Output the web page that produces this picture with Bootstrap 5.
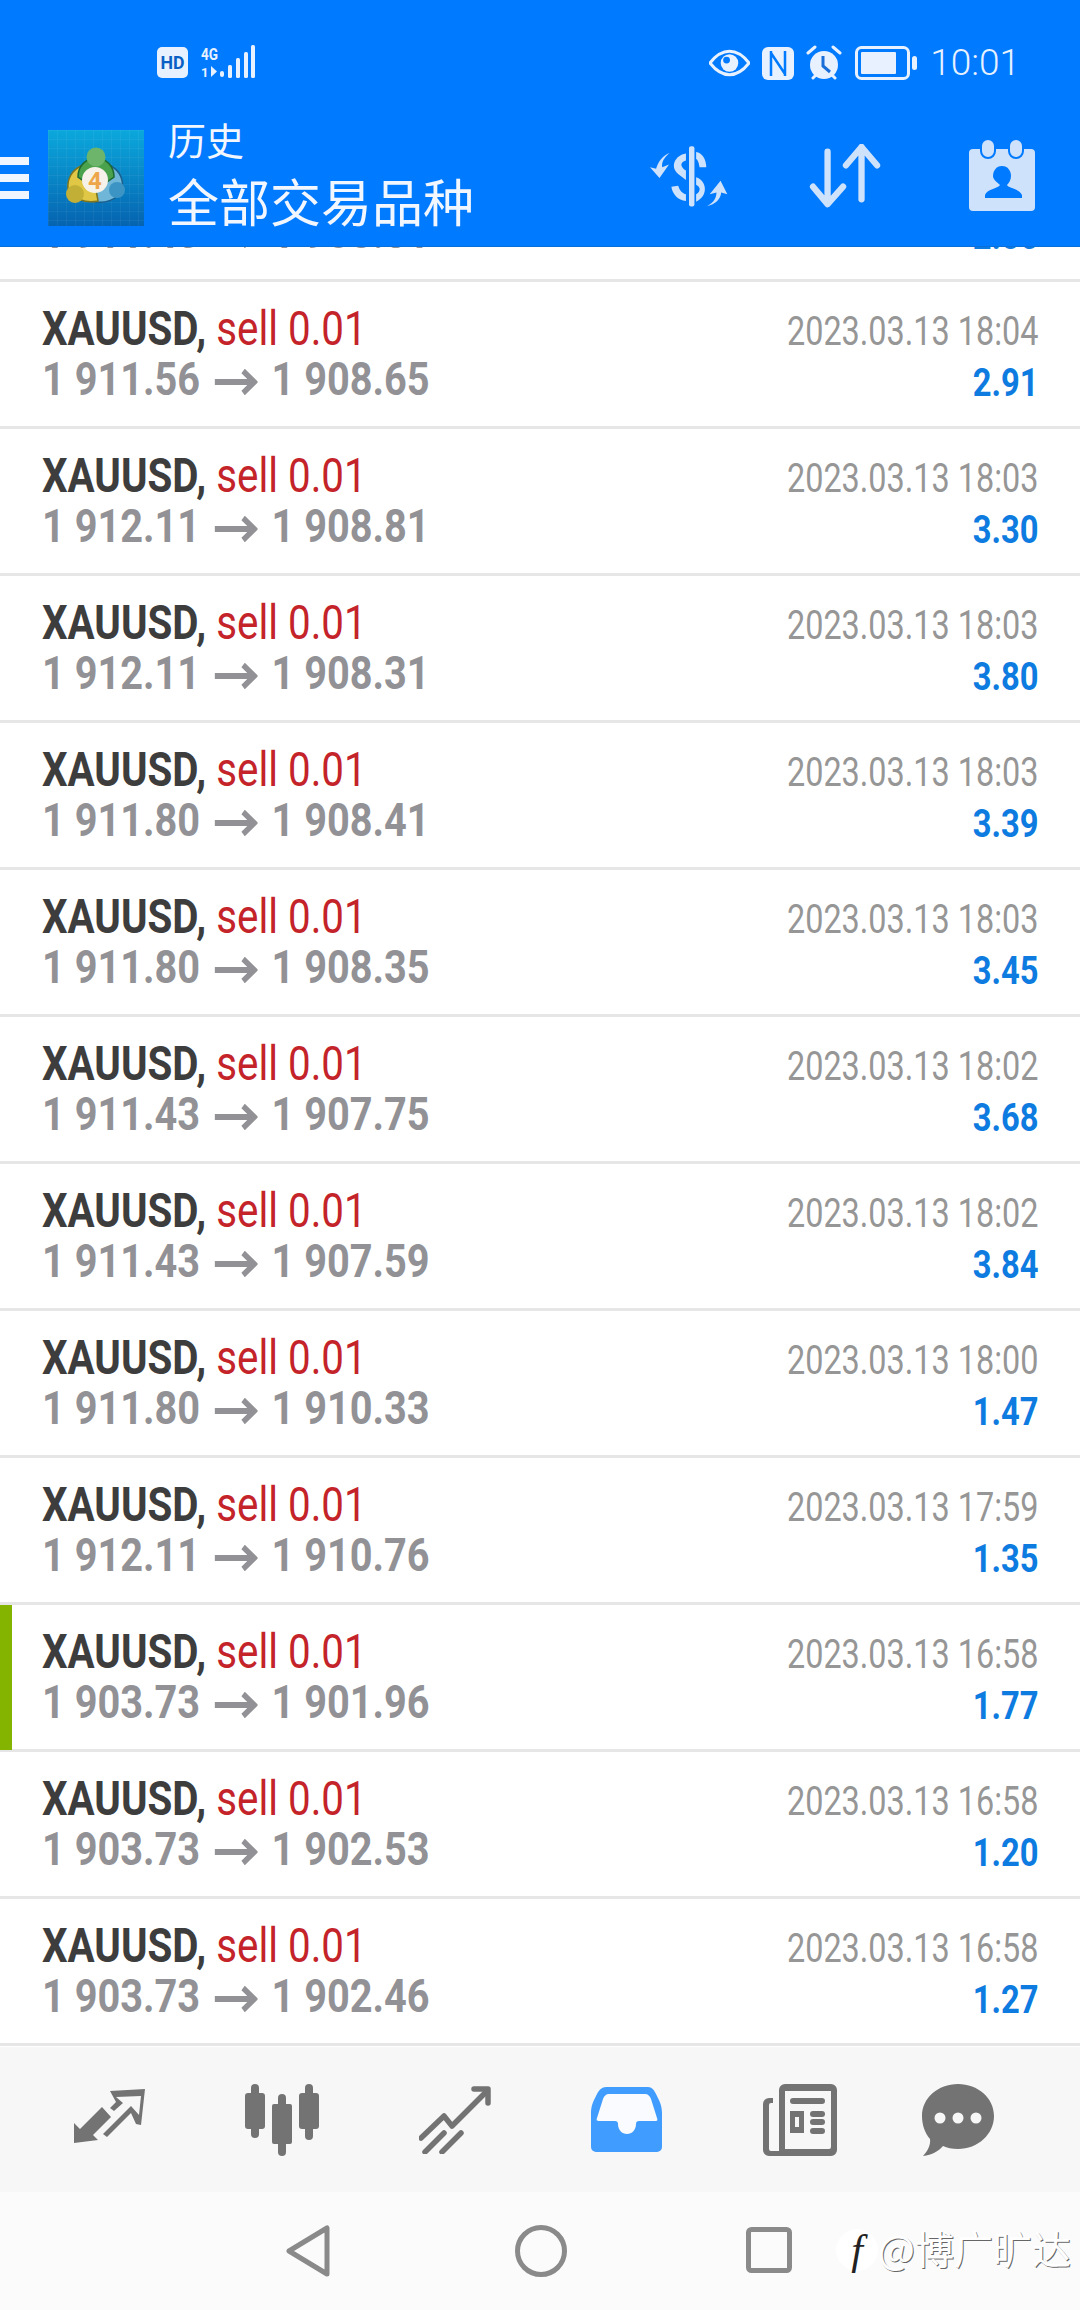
<!DOCTYPE html>
<html lang="zh">
<head>
<meta charset="UTF-8">
<title>历史</title>
<link href="https://cdn.jsdelivr.net/npm/bootstrap@5.3.0/dist/css/bootstrap.min.css" rel="stylesheet">
<style>
html, body { margin: 0; height: 2310px; overflow: hidden; background: #fff; }
.phone { height: 2310px; font-family: Roboto, sans-serif; }
.top-head { background: #007aff; height: 246px; color: #f0f6ff; z-index: 5; flex: none; box-shadow: 0 1px 0 #0a6fd8; }
.status-line { height: 110px; padding: 45px 60px 0 157px; }
.clock { font-size: 37px; line-height: 32px; font-weight: 300; color: #e8f1ff; margin-left: 13px; }
.st-gap { margin-right: 12px; }
.head-main { height: 136px; }
.burger { width: 29px; height: 42px; border-top: 8px solid #f0f6ff; border-bottom: 8px solid #f0f6ff; position: relative; margin-top: 0; }
.burger::after { content: ""; position: absolute; left: 0; right: 0; top: 9px; height: 8px; background: #f0f6ff; }
.app-logo { margin-left: 19px; display: block; }
.head-title { margin-left: 24px; margin-bottom: 4px; font-family: "Noto Sans CJK SC", sans-serif; color: #f2f7ff; white-space: nowrap; }
.title-sm { font-size: 38px; line-height: 48px; }
.title-lg { font-size: 51px; line-height: 74px; }
.head-tools { margin-bottom: 4px; }
.head-tools svg { display: block; }
.tool-dollar { margin-right: 81px; }
.tool-sort { margin-right: 85px; }
.tool-cal { margin-right: 44px; margin-bottom: 2px; }
.rows { flex: 1 1 auto; overflow: hidden; min-height: 0; }
.trade-row { height: 147px; padding: 21px 42px 0 42px; border-bottom: 3px solid #e6e6e6; position: relative; }
.trade-row.cut { margin-top: -111px; }
.trade-row.mark-green::before { content: ""; position: absolute; left: 0; top: 0; bottom: -1px; width: 12px; background: #84b300; }
.line-a { font-size: 48px; line-height: 52px; white-space: nowrap; transform: scaleX(.84); transform-origin: left center; }
.sym { font-weight: 700; color: #3d3d3d; }
.side { color: #c4232a; }
.line-b { font-size: 46px; line-height: 49px; color: #929296; font-weight: 700; white-space: nowrap; transform: scaleX(.863); transform-origin: left center; }
.go-arrow { display: inline-block; vertical-align: 0; margin: 0 5px; }
.when { font-size: 40px; line-height: 57px; color: #969696; transform: scaleX(.81); transform-origin: right center; white-space: nowrap; }
.gain { font-size: 38px; line-height: 46px; font-weight: 700; color: #0d7be0; transform: scaleX(.86); transform-origin: right center; }
.tool-tabs { height: 145px; background: #f7f7f7; flex: none; padding-left: 73px; gap: 100px; }
.tab-last { margin-left: -15px; }
.sys-nav { height: 118px; background: #fbfbfb; flex: none; position: relative; }
.nav-back { left: 286px; top: 33px; }
.nav-home { left: 515px; top: 33px; }
.nav-recent { left: 746px; top: 35px; }
.mark-text { position: absolute; right: 9px; top: 32px; font-family: "Noto Sans CJK SC", sans-serif; font-size: 39px; line-height: 46px; color: #fff; text-shadow: 1px 1px 0 #666; white-space: nowrap; }
.mark-f { display: inline-block; width: 42px; height: 42px; border-radius: 50%; background: #fff; color: #222; font-family: "Liberation Serif", serif; font-style: italic; font-size: 42px; line-height: 42px; text-align: center; text-shadow: none; margin-right: 0; }
</style>
</head>
<body>
<div class="phone d-flex flex-column">
  <div class="top-head position-relative">
    <div class="status-line d-flex justify-content-between align-items-start">
      <div class="d-flex align-items-center" style="gap:12px">
        <svg width="32" height="32" viewBox="0 0 32 32"><rect y="1" width="31" height="31" rx="5" fill="#e8f1ff"/><text x="15.5" y="23" text-anchor="middle" font-family="Roboto, sans-serif" font-size="19" font-weight="700" textLength="24" lengthAdjust="spacingAndGlyphs" fill="#0a5fc4">HD</text></svg>
        <svg width="54" height="34" viewBox="0 0 54 34" fill="#e8f1ff"><text x="0" y="15" font-family="Roboto, sans-serif" font-size="16" font-weight="700" textLength="17" lengthAdjust="spacingAndGlyphs">4G</text><text x="0" y="32" font-family="Roboto, sans-serif" font-size="13" font-weight="700">1</text><path d="M10 21v11l6-5.500z"/><rect x="19" y="26" width="4" height="6" rx="2"/><rect x="27" y="20" width="4" height="13" rx="1.500"/><rect x="35" y="13" width="4" height="20" rx="1.500"/><rect x="43" y="7" width="4" height="26" rx="1.500"/><rect x="50" y="0" width="4" height="33" rx="1.500"/></svg>
      </div>
      <div class="d-flex align-items-center">
        <svg class="st-gap" width="41" height="30" viewBox="0 0 42 30"><path d="M1 15C8 6 14 3 21 3s13 3 20 12c-7 9-13 12-20 12S8 24 1 15z" fill="none" stroke="#e8f1ff" stroke-width="3"/><circle cx="21" cy="15" r="9" fill="#e8f1ff"/><circle cx="18" cy="12" r="3.500" fill="#007aff"/></svg>
        <svg class="st-gap" width="32" height="33" viewBox="0 0 32 33"><rect width="32" height="33" rx="6" fill="#e8f1ff"/><path d="M9 4v25M9 6l14 21M23 4v25" fill="none" stroke="#007aff" stroke-width="2.500"/></svg>
        <svg width="36" height="36" viewBox="0 0 36 36" style="margin-right:13px"><circle cx="18" cy="20" r="14" fill="#e8f1ff"/><path d="M2 8l7-6M34 8l-7-6M7 33l3-3M29 33l-3-3" stroke="#e8f1ff" stroke-width="3" stroke-linecap="round"/><path d="M17 11v10l7 6" fill="none" stroke="#1a6ed8" stroke-width="3"/></svg>
        <svg width="62" height="34" viewBox="0 0 62 34"><rect x="1.500" y="1.500" width="52" height="31" rx="5" fill="none" stroke="#e8f1ff" stroke-width="3"/><rect x="6" y="6" width="35" height="22" rx="1" fill="#e8f1ff"/><rect x="57" y="10" width="5" height="14" rx="2.500" fill="#e8f1ff"/></svg>
        <span class="clock">10:01</span>
      </div>
    </div>
    <div class="head-main d-flex align-items-center">
      <div class="burger"></div>
      <svg class="app-logo" width="96" height="96" viewBox="0 0 96 96">
        <defs>
          <linearGradient id="bg1" x1="0" y1="0" x2="0" y2="1"><stop offset="0" stop-color="#0ba8dc"/><stop offset="1" stop-color="#0563b0"/></linearGradient>
          <pattern id="grid1" width="9" height="9" patternUnits="userSpaceOnUse"><path d="M9 0H0V9" fill="none" stroke="#ffffff" stroke-opacity=".09" stroke-width="1"/></pattern>
        </defs>
        <rect width="96" height="96" fill="url(#bg1)"/>
        <rect width="96" height="96" fill="url(#grid1)"/>
        <path d="M63 36c9 5 13 14 11 24-4 9-17 15-31 11l6-22z" fill="#6fb6d8" stroke="#1b5f8c" stroke-width="1.500"/>
        <path d="M33 36c-9 4-14 13-13 23 4 9 17 15 30 12L46 48z" fill="#e0c846" stroke="#7d7420" stroke-width="1.500"/>
        <path d="M48 28c-10 0-18 8-18 19l10 7h16l10-7c0-11-8-19-18-19z" fill="#4aa24c" stroke="#1d6a33" stroke-width="1.500"/>
        <circle cx="48" cy="27" r="9.500" fill="#6cb56a"/>
        <circle cx="27" cy="64" r="9" fill="#c2b036"/>
        <circle cx="69" cy="60" r="8" fill="#3b94c4"/>
        <circle cx="47" cy="50" r="13" fill="#f6f2ea"/>
        <text x="47" y="59" text-anchor="middle" font-family="Roboto, sans-serif" font-size="24" font-weight="700" fill="#eea64a">4</text>
      </svg>
      <div class="head-title">
        <div class="title-sm">历史</div>
        <div class="title-lg">全部交易品种</div>
      </div>
      <div class="head-tools ms-auto d-flex align-items-center">
        <svg class="tool-dollar" width="78" height="63" viewBox="322 425 230 185" fill="#cfe2fb">
          <rect x="437" y="428" width="16" height="178" rx="6"/>
          <path d="M428 450C395 455 380 490 405 510L428 528V500C410 488 410 475 428 470Z"/>
          <path d="M458 445C475 448 488 465 488 490L468 490C466 475 462 468 458 466Z"/>
          <path d="M458 520C490 530 495 575 458 592V570C472 562 472 548 458 542Z"/>
          <path d="M428 590C405 588 388 570 385 548L405 545C410 560 418 568 428 570Z"/>
          <path d="M380 448C365 460 355 475 358 490L378 482L350 522L322 490L340 495C345 475 360 455 380 448Z"/>
          <path d="M490 605C510 595 518 580 518 565L498 570L530 530L550 570L532 565C530 585 515 600 490 605Z"/>
        </svg>
        <svg class="tool-sort" width="74" height="64" viewBox="0 0 74 66" fill="none" stroke="#cfe2fb" stroke-width="6.500" stroke-linecap="round" stroke-linejoin="round"><path d="M18 8v54M3 44l15 18 16-18"/><path d="M53 3v54M37 22L53 3l16 19"/></svg>
        <svg class="tool-cal" width="68" height="72" viewBox="0 0 68 72"><path d="M5 10h58a4 4 0 0 1 4 4v54a4 4 0 0 1-4 4H5a4 4 0 0 1-4-4V14a4 4 0 0 1 4-4z" fill="#cfe2fb"/><rect x="13" y="0" width="14" height="19" rx="7" fill="#cfe2fb" stroke="#007aff" stroke-width="2"/><rect x="41" y="0" width="14" height="19" rx="7" fill="#cfe2fb" stroke="#007aff" stroke-width="2"/><path d="M34 27c6 0 9 5 9 10 0 4-2 7-4 9 1 3 13 4 15 10v3H17v-3c2-6 14-7 15-10-2-2-7-5-7-9 0-5 3-10 9-10z" fill="#007aff"/></svg>
      </div>
    </div>
  </div>

  <div class="rows" id="rows"></div>

  <div class="tool-tabs d-flex align-items-center" id="tabs">
    <svg width="72" height="66" viewBox="0 0 72 66" fill="#737373"><path d="M1 36l6 6L29 20l9 10-18 18 5 5-24 3z"/><path d="M37 4l35-2-4 36-5-1-5-11-24 24-4-3 28-28 8 9 2-19-25 1 7 6-9 8-4-3 6-6z"/></svg>
    <svg width="74" height="72" viewBox="0 0 74 72" fill="#737373"><rect x="6" y="0" width="8" height="54" rx="4"/><rect x="0" y="9" width="20" height="36" rx="3"/><rect x="33" y="10" width="8" height="62" rx="4"/><path fill-rule="evenodd" d="M29 20h16a2 2 0 0 1 2 2v36a2 2 0 0 1-2 2H29a2 2 0 0 1-2-2V22a2 2 0 0 1 2-2zm4 8v24h8V28z"/><rect x="60" y="0" width="8" height="56" rx="4"/><rect x="54" y="9" width="20" height="36" rx="3"/></svg>
    <svg width="72" height="68" viewBox="0 0 72 68" fill="none" stroke="#737373" stroke-width="5.500" stroke-linecap="round" stroke-linejoin="round"><path d="M2 52l23-22 8 10 35-35"/><path d="M55 3h14v14"/><path d="M6 66l19-19M23 66l19-19"/></svg>
    <svg width="72" height="66" viewBox="0 0 72 66"><path d="M15 0h42c4 0 6 3 8 7 3 6 6 11 6 19v34a5 5 0 0 1-5 5H5a5 5 0 0 1-5-5V26c0-8 3-13 6-19 2-4 5-7 9-7z" fill="#409cff"/><path d="M18 7h36c3 0 5 2 6 5l6 19c1 3 0 3-3 3H48c-2 0-3 1-3 3 0 6-4 10-9 10s-9-4-9-10c0-2-1-3-3-3H9c-3 0-4 0-3-3l6-19c1-3 3-5 6-5z" fill="#f9fbff"/></svg>
    <svg width="74" height="72" viewBox="0 0 74 72" fill="#737373"><path fill-rule="evenodd" d="M22 0h46a6 6 0 0 1 6 6v60a6 6 0 0 1-6 6H6a6 6 0 0 1-6-6V20a6 6 0 0 1 6-6h4v5H8a2 2 0 0 0-2 2v44a2 2 0 0 0 2 2h8V6a6 6 0 0 1 6-6zm0 7v58h44a2 2 0 0 0 2-2V7z"/><rect x="27" y="14" width="35" height="6" rx="3"/><path fill-rule="evenodd" d="M27 27h14v22H27zm5 6v10h4V33z"/><rect x="47" y="27" width="15" height="6" rx="3"/><rect x="47" y="35" width="15" height="6" rx="3"/><rect x="47" y="44" width="15" height="6" rx="3"/></svg>
    <svg class="tab-last" width="72" height="72" viewBox="0 0 72 72"><path d="M36 0c20 0 36 14 36 32S56 65 36 65c-6 0-11-1-15-3-4 5-11 9-20 10 4-4 8-11 7-17C3 49 0 41 0 32 0 14 16 0 36 0z" fill="#737373"/><circle cx="18" cy="34" r="5.500" fill="#f7f7f7"/><circle cx="36" cy="34" r="5.500" fill="#f7f7f7"/><circle cx="54" cy="34" r="5.500" fill="#f7f7f7"/></svg>
  </div>

  <div class="sys-nav">
    <svg class="position-absolute nav-back" width="44" height="52" viewBox="0 0 44 52" fill="none" stroke="#8a8a8a" stroke-width="5" stroke-linejoin="round"><path d="M41 3v46L3 26z"/></svg>
    <svg class="position-absolute nav-home" width="52" height="52" viewBox="0 0 52 52" fill="none" stroke="#8a8a8a" stroke-width="5"><circle cx="26" cy="26" r="23.500"/></svg>
    <svg class="position-absolute nav-recent" width="46" height="46" viewBox="0 0 46 46" fill="none" stroke="#8a8a8a" stroke-width="5"><rect x="2.500" y="2.500" width="41" height="41" rx="3"/></svg>
    <span class="mark-text"><span class="mark-f">f</span>@博广旷达</span>
  </div>
</div>
<script>
  const data = [
    ["18:04", "1 911.43", "1 908.51", "2.85", true],
    ["18:04", "1 911.56", "1 908.65", "2.91"],
    ["18:03", "1 912.11", "1 908.81", "3.30"],
    ["18:03", "1 912.11", "1 908.31", "3.80"],
    ["18:03", "1 911.80", "1 908.41", "3.39"],
    ["18:03", "1 911.80", "1 908.35", "3.45"],
    ["18:02", "1 911.43", "1 907.75", "3.68"],
    ["18:02", "1 911.43", "1 907.59", "3.84"],
    ["18:00", "1 911.80", "1 910.33", "1.47"],
    ["17:59", "1 912.11", "1 910.76", "1.35"],
    ["16:58", "1 903.73", "1 901.96", "1.77", false, true],
    ["16:58", "1 903.73", "1 902.53", "1.20"],
    ["16:58", "1 903.73", "1 902.46", "1.27"]
  ];
  const arrow = `<svg class="go-arrow" width="50" height="26" viewBox="0 0 50 26" fill="none" stroke="#929296" stroke-width="6"><path d="M0 13h46M33 2l13 11-13 11"/></svg>`;
  document.getElementById("rows").innerHTML = data.map(d => `
    <div class="trade-row d-flex justify-content-between ${d[4] ? "cut" : ""} ${d[5] ? "mark-green" : ""}">
      <div>
        <div class="line-a"><span class="sym">XAUUSD,</span> <span class="side">sell 0.01</span></div>
        <div class="line-b">${d[1]} ${arrow} ${d[2]}</div>
      </div>
      <div class="text-end">
        <div class="when">2023.03.13 ${d[0]}</div>
        <div class="gain">${d[3]}</div>
      </div>
    </div>`).join("");
</script>
<script src="https://cdn.jsdelivr.net/npm/bootstrap@5.3.0/dist/js/bootstrap.bundle.min.js"></script>
</body>
</html>
